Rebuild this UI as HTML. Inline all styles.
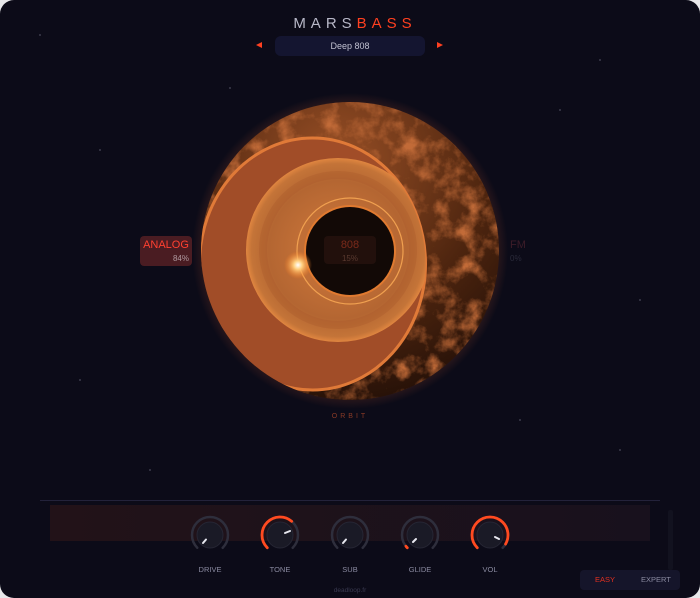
<!DOCTYPE html>
<html><head><meta charset="utf-8"><style>
html,body{margin:0;padding:0;background:#e8e8ea;}
#f{position:relative;width:700px;height:598px;background:#0c0b18;border-radius:14px;overflow:hidden;font-family:"Liberation Sans",sans-serif;}
.abs{position:absolute;}
.t{position:absolute;text-align:center;}
</style></head><body><div id="f">
<svg class="abs" style="left:0;top:0" width="700" height="598">
<defs>
<radialGradient id="pl" cx="0.45" cy="0.2" r="0.85">
<stop offset="0" stop-color="#9a5026"/><stop offset="0.6" stop-color="#4e250f"/><stop offset="1" stop-color="#220f07"/></radialGradient>
<filter id="tx" x="0" y="0" width="1" height="1" color-interpolation-filters="sRGB"><feTurbulence type="fractalNoise" baseFrequency="0.05" numOctaves="5" seed="7"/><feColorMatrix values="0 0 0 0 0.76  0 0 0 0 0.42  0 0 0 0 0.22  0 0 0 2.6 -1.15"/><feComposite in2="SourceGraphic" operator="in"/></filter>
<radialGradient id="gl" cx="0.5" cy="0.5" r="0.5"><stop offset="0.85" stop-color="#e06030" stop-opacity="0.3"/><stop offset="1" stop-color="#e06030" stop-opacity="0"/></radialGradient>
<radialGradient id="dk" cx="0.5" cy="0.5" r="0.5"><stop offset="0.45" stop-color="#c06e36"/><stop offset="0.75" stop-color="#b46632"/><stop offset="0.94" stop-color="#c47438"/><stop offset="1" stop-color="#e08640"/></radialGradient>
<radialGradient id="sun" cx="0.5" cy="0.5" r="0.5"><stop offset="0" stop-color="#fff"/><stop offset="0.3" stop-color="#ffd080"/><stop offset="1" stop-color="#ff8020" stop-opacity="0"/></radialGradient>
<clipPath id="pc"><circle cx="350" cy="251" r="149"/></clipPath>
<clipPath id="cc"><ellipse cx="312.5" cy="264" rx="113" ry="126"/></clipPath>
<linearGradient id="bar" x1="0" x2="1"><stop offset="0" stop-color="#221218"/><stop offset="1" stop-color="#18111d"/></linearGradient>
</defs>
<g fill="#8a8aa0"><circle cx="40" cy="35" r=".6"/><circle cx="600" cy="60" r=".6"/><circle cx="100" cy="150" r=".6"/><circle cx="560" cy="110" r=".6"/><circle cx="640" cy="300" r=".6"/><circle cx="80" cy="380" r=".6"/><circle cx="620" cy="450" r=".6"/><circle cx="230" cy="88" r=".6"/><circle cx="520" cy="420" r=".6"/><circle cx="150" cy="470" r=".6"/></g>
<circle cx="350" cy="251" r="158" fill="url(#gl)"/>
<circle cx="350" cy="251" r="149" fill="url(#pl)"/>
<circle cx="350" cy="251" r="149" fill="#000" filter="url(#tx)"/>
<g clip-path="url(#pc)">
<ellipse cx="312.5" cy="264" rx="113" ry="126" fill="#a14d28" stroke="#e07a38" stroke-width="3"/>
<g clip-path="url(#cc)">
<circle cx="338" cy="250" r="92" fill="url(#dk)"/>
<circle cx="338" cy="250" r="75" fill="none" stroke="#a85a2c" stroke-width="8" opacity=".35"/>
</g>
</g>
<circle cx="350" cy="251" r="53" fill="none" stroke="#f0a050" stroke-width="1.2"/>
<circle cx="350" cy="251" r="46" fill="#e07a30"/>
<circle cx="350" cy="251" r="44" fill="#120906"/>
<circle cx="298" cy="265" r="14" fill="url(#sun)"/>
<rect x="324" y="236" width="52" height="28" rx="4" fill="#2a1410" opacity=".7"/>
<line x1="40" y1="500.5" x2="660" y2="500.5" stroke="#23223a"/>
<rect x="50" y="505" width="600" height="36" fill="url(#bar)"/>
<rect x="668" y="510" width="5" height="60" rx="2" fill="#12121f"/>
<rect x="140" y="236" width="52" height="30" rx="4" fill="#4a1c22"/>
<g stroke-linecap="round">
<g transform="translate(210,535)"><circle r="18" fill="none" stroke="#2e2e3c" stroke-width="2.5" stroke-dasharray="84.8 200" transform="rotate(135)"/><circle r="13" fill="#1a1a26" stroke="#262634"/><line x1="-4" y1="4.5" x2="-7" y2="8" stroke="#e8e8f0" stroke-width="2"/></g>
<g transform="translate(280,535)"><circle r="18" fill="none" stroke="#2e2e3c" stroke-width="2.5" stroke-dasharray="84.8 200" transform="rotate(135)"/><circle r="18" fill="none" stroke="#ff4a20" stroke-width="2.8" stroke-dasharray="55 200" transform="rotate(135)"/><circle r="13" fill="#1a1a26" stroke="#262634"/><line x1="5" y1="-2" x2="10" y2="-4" stroke="#e8e8f0" stroke-width="2"/></g>
<g transform="translate(350,535)"><circle r="18" fill="none" stroke="#2e2e3c" stroke-width="2.5" stroke-dasharray="84.8 200" transform="rotate(135)"/><circle r="13" fill="#1a1a26" stroke="#262634"/><line x1="-4" y1="4.5" x2="-7" y2="8" stroke="#e8e8f0" stroke-width="2"/></g>
<g transform="translate(420,535)"><circle r="18" fill="none" stroke="#2e2e3c" stroke-width="2.5" stroke-dasharray="84.8 200" transform="rotate(135)"/><circle r="18" fill="none" stroke="#ff4a20" stroke-width="2.8" stroke-dasharray="2 200" transform="rotate(135)"/><circle r="13" fill="#1a1a26" stroke="#262634"/><line x1="-4" y1="4" x2="-7" y2="7" stroke="#e8e8f0" stroke-width="2"/></g>
<g transform="translate(490,535)"><circle r="18" fill="none" stroke="#2e2e3c" stroke-width="2.5" stroke-dasharray="84.8 200" transform="rotate(135)"/><circle r="18" fill="none" stroke="#ff4a20" stroke-width="2.8" stroke-dasharray="80 200" transform="rotate(135)"/><circle r="13" fill="#1a1a26" stroke="#262634"/><line x1="5" y1="2" x2="9" y2="4" stroke="#e8e8f0" stroke-width="2"/></g>
</g>
<polygon points="256,45 262,42 262,48" fill="#ff4020"/>
<polygon points="443,45 437,42 437,48" fill="#ff4020"/>
</svg>
<div class="t" style="left:250px;top:15px;width:200px;font-size:15px;letter-spacing:5px;color:#b8b8c8;padding-left:5px">MARS<span style="color:#ff4020">BASS</span></div>
<div class="abs" style="left:275px;top:36px;width:150px;height:20px;border-radius:6px;background:#141530;color:#c0c0d0;font-size:9px;text-align:center;line-height:20px">Deep 808</div>
<div class="t" style="left:140px;top:239px;width:52px;font-size:11px;color:#ff4030">ANALOG</div>
<div class="t" style="left:140px;top:254px;width:49px;text-align:right;font-size:8px;color:#b09aa0">84%</div>
<div class="t" style="left:324px;top:239px;width:52px;font-size:11px;color:#7a2a1a">808</div>
<div class="t" style="left:324px;top:254px;width:52px;font-size:8px;color:#5a3a30">15%</div>
<div class="abs" style="left:510px;top:239px;font-size:11px;color:#3c1c28">FM</div>
<div class="abs" style="left:510px;top:254px;font-size:8px;color:#2a2a3a">0%</div>
<div class="t" style="left:300px;top:413px;width:100px;font-size:7px;letter-spacing:3px;color:#8a3a26">ORBIT</div>
<div class="t" style="left:180px;top:565px;width:60px;font-size:7.5px;color:#8a8aa0">DRIVE</div>
<div class="t" style="left:250px;top:565px;width:60px;font-size:7.5px;color:#8a8aa0">TONE</div>
<div class="t" style="left:320px;top:565px;width:60px;font-size:7.5px;color:#8a8aa0">SUB</div>
<div class="t" style="left:390px;top:565px;width:60px;font-size:7.5px;color:#8a8aa0">GLIDE</div>
<div class="t" style="left:460px;top:565px;width:60px;font-size:7.5px;color:#8a8aa0">VOL</div>
<div class="t" style="left:320px;top:587px;width:60px;font-size:6.5px;color:#3a3a50">deadloop.fr</div>
<div class="abs" style="left:580px;top:570px;width:100px;height:20px;border-radius:4px;background:#15152a;font-size:7.5px;line-height:20px">
<span class="abs" style="left:15px;color:#e03020">EASY</span><span class="abs" style="left:61px;color:#8a8aa0">EXPERT</span></div>
</div></body></html>
